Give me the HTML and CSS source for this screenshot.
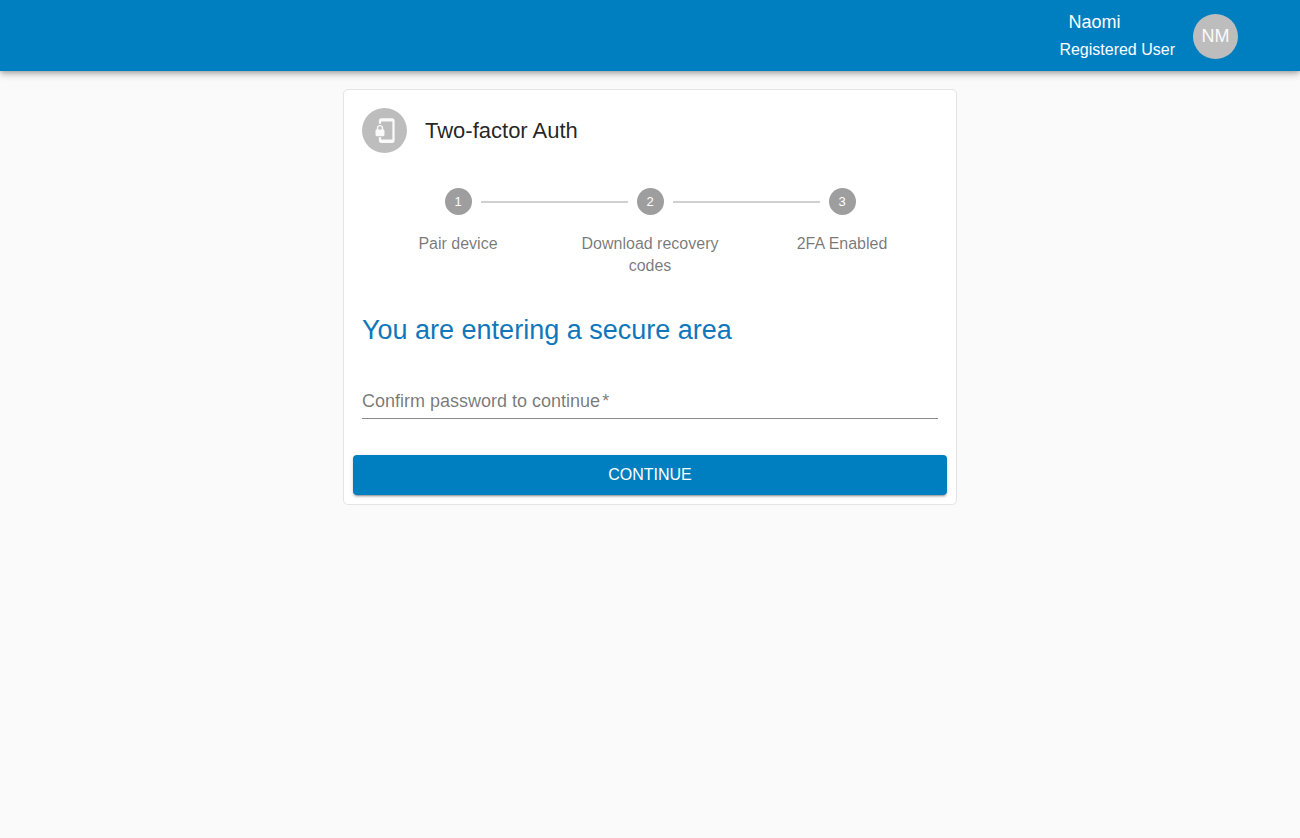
FILE: index.html
```html
<!DOCTYPE html>
<html lang="en">
<head>
<meta charset="utf-8">
<meta name="viewport" content="width=device-width, initial-scale=1">
<title>Two-factor Auth</title>
<link rel="stylesheet" href="styles.css">
</head>
<body>
<header class="app-bar">
  <div class="user">
    <span class="user-name">Naomi</span>
    <span class="user-role">Registered User</span>
  </div>
  <div class="avatar">NM</div>
</header>
<main class="page">
  <form class="card">
    <div class="card-header">
      <div class="avatar">
        <svg class="avatar-icon" viewBox="0 0 24 24" aria-hidden="true"><path fill="currentColor" d="M19 1H9c-1.100 0-2 .9-2 2v3h2V4h10v16H9v-2H7v3c0 1.100.9 2 2 2h10c1.100 0 2-.9 2-2V3c0-1.100-.9-2-2-2zm-8.200 10V9.500C10.800 8.100 9.400 7 8 7S5.200 8.100 5.200 9.500V11c-.6 0-1.200.6-1.200 1.200v3.500c0 .7.6 1.300 1.200 1.300h5.500c.7 0 1.300-.6 1.300-1.200v-3.500c0-.7-.6-1.300-1.200-1.300zm-1.300 0h-3V9.500c0-.8.7-1.300 1.500-1.300s1.500.5 1.500 1.300V11z"/></svg>
      </div>
      <h1 class="card-title">Two-factor Auth</h1>
    </div>
    <ol class="stepper">
      <li class="step"><span class="step-track"><span class="step-number">1</span></span><span class="step-label">Pair device</span></li>
      <li class="step"><span class="step-track"><span class="step-number">2</span></span><span class="step-label">Download recovery codes</span></li>
      <li class="step"><span class="step-track"><span class="step-number">3</span></span><span class="step-label">2FA Enabled</span></li>
    </ol>
    <h2 class="section-title">You are entering a secure area</h2>
    <div class="field">
      <input class="field-input" id="password" type="password" placeholder=" " autocomplete="current-password" required>
      <label class="field-label" for="password">Confirm password to continue<span class="field-required">*</span></label>
    </div>
    <div class="card-actions">
      <button class="button" type="submit">CONTINUE</button>
    </div>
  </form>
</main>
</body>
</html>
```
FILE: styles.css
```css
* {
  box-sizing: border-box;
}

body {
  margin: 0;
  background: #fafafa;
  color: rgba(0, 0, 0, 0.87);
  font-family: Helvetica, "Liberation Sans", Arial, sans-serif;
  font-size: 18px;
}

.app-bar {
  display: flex;
  justify-content: flex-end;
  align-items: center;
  gap: 18px;
  padding: 9px 62px 8px 18px;
  background: #007fc0;
  color: #fff;
  box-shadow: 0 2px 4px -1px rgba(0, 0, 0, 0.2), 0 4px 6px rgba(0, 0, 0, 0.14), 0 1px 11px rgba(0, 0, 0, 0.12);
}

.user {
  display: flex;
  flex-direction: column;
  line-height: 27px;
}

.user-name {
  padding-left: 9px;
}

.user-role {
  font-size: 16px;
}

.avatar {
  display: flex;
  flex: none;
  align-items: center;
  justify-content: center;
  width: 45px;
  height: 45px;
  border-radius: 50%;
  background: #bdbdbd;
  color: #fafafa;
}

.avatar-icon {
  width: 27px;
  height: 27px;
}

.page {
  display: flex;
  justify-content: center;
  padding: 18px 16px;
}

.card {
  width: 100%;
  max-width: 614px;
  border: 1px solid #e4e4e4;
  border-radius: 5px;
  background: #fff;
}

.card-header {
  display: flex;
  align-items: center;
  gap: 18px;
  padding: 18px;
}

.card-title {
  margin: 0;
  font-size: 22px;
  font-weight: 400;
}

.stepper {
  display: flex;
  margin: 0;
  padding: 17px 18px 35px;
  list-style: none;
}

.step {
  display: flex;
  flex: 1;
  flex-direction: column;
  gap: 18px;
}

.step-track {
  display: flex;
  align-items: center;
  gap: 9px;
}

.step-track::before,
.step-track::after {
  content: "";
  flex: 1;
  height: 2px;
  background: #d0d0d0;
}

.step:first-child .step-track::before,
.step:last-child .step-track::after {
  background: transparent;
}

.step-number {
  width: 27px;
  height: 27px;
  border-radius: 50%;
  background: #9e9e9e;
  color: #fff;
  font-size: 13px;
  line-height: 27px;
  text-align: center;
}

.step-label {
  padding: 0 9px;
  color: rgba(0, 0, 0, 0.54);
  font-size: 16px;
  line-height: 22px;
  text-align: center;
}

.section-title {
  margin: 0 18px;
  color: #1077bb;
  font-size: 27px;
  font-weight: 400;
  line-height: 36px;
}

.field {
  position: relative;
  margin: 36px 18px;
}

.field-input {
  display: block;
  width: 100%;
  height: 35px;
  padding: 0;
  border: 0;
  border-bottom: 1px solid #8c8c8c;
  background: transparent;
  font: inherit;
  outline: none;
}

.field-input:focus {
  border-bottom-color: #007fc0;
}

.field-label {
  position: absolute;
  top: 0;
  left: 0;
  color: rgba(0, 0, 0, 0.54);
  line-height: 34px;
  pointer-events: none;
}

.field-input:focus + .field-label,
.field-input:not(:placeholder-shown) + .field-label {
  top: -20px;
  font-size: 13px;
}

.field-required {
  padding-left: 2px;
}

.card-actions {
  padding: 0 9px 9px;
}

.button {
  display: block;
  width: 100%;
  height: 40px;
  border: 0;
  border-radius: 4px;
  background: #007fc0;
  color: #fff;
  font-family: inherit;
  font-size: 16px;
  box-shadow: 0 3px 1px -2px rgba(0, 0, 0, 0.2), 0 2px 2px rgba(0, 0, 0, 0.14), 0 1px 5px rgba(0, 0, 0, 0.12);
  cursor: pointer;
}
```
